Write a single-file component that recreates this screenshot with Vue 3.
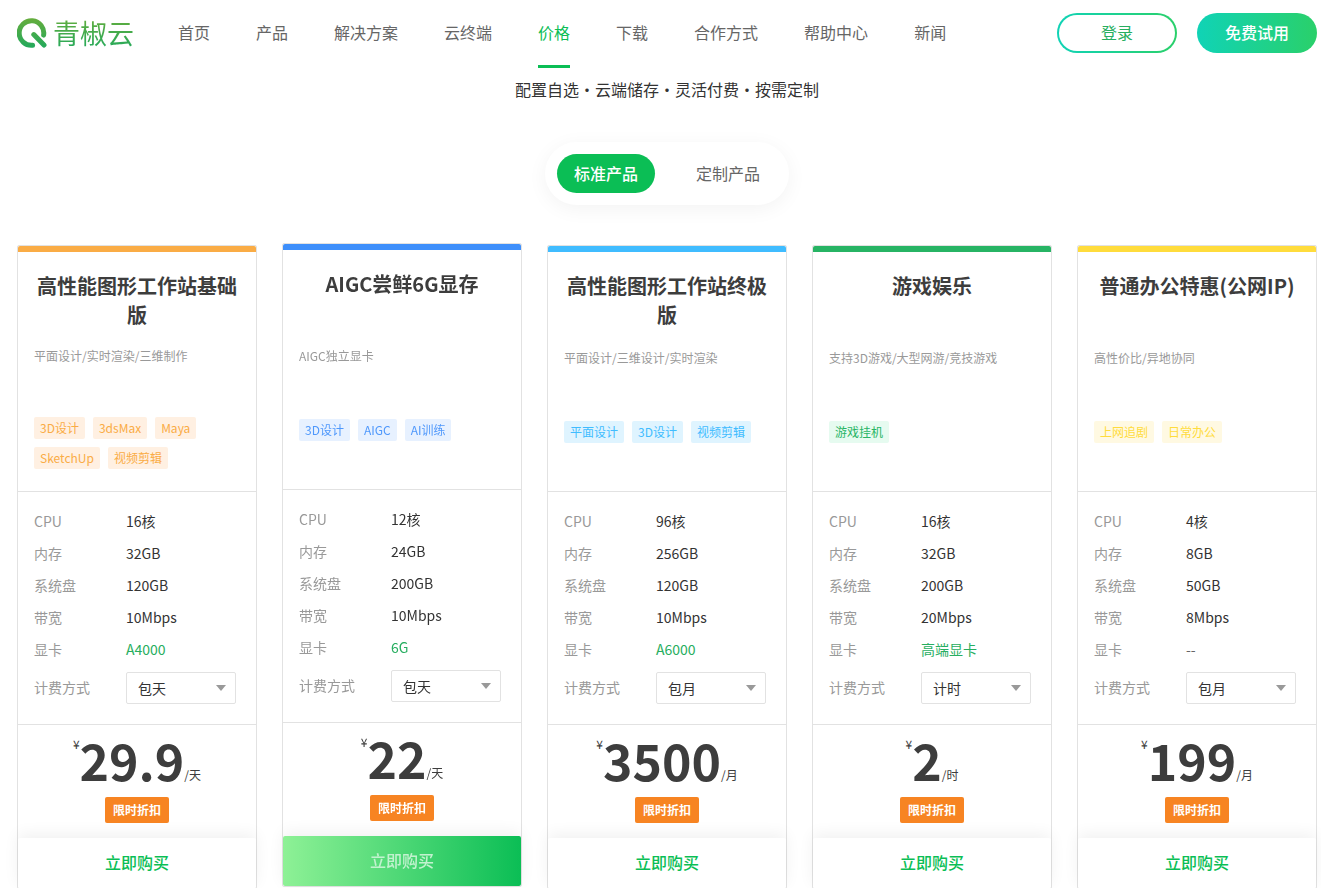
<script setup>
import { ref } from 'vue'

const navItems = ['首页', '产品', '解决方案', '云终端', '价格', '下载', '合作方式', '帮助中心', '新闻']
const activeNav = '价格'

const tabs = ['标准产品', '定制产品']
const activeTab = ref('标准产品')

const plans = ref([
  {
    theme: 'orange', title: '高性能图形工作站基础版', desc: '平面设计/实时渲染/三维制作',
    tags: ['3D设计', '3dsMax', 'Maya', 'SketchUp', '视频剪辑'],
    specs: [['CPU', '16核'], ['内存', '32GB'], ['系统盘', '120GB'], ['带宽', '10Mbps']],
    gpu: 'A4000', billing: '包天', price: '29.9', unit: '天'
  },
  {
    theme: 'blue', featured: true, title: 'AIGC尝鲜6G显存', desc: 'AIGC独立显卡',
    tags: ['3D设计', 'AIGC', 'AI训练'],
    specs: [['CPU', '12核'], ['内存', '24GB'], ['系统盘', '200GB'], ['带宽', '10Mbps']],
    gpu: '6G', billing: '包天', price: '22', unit: '天'
  },
  {
    theme: 'cyan', title: '高性能图形工作站终极版', desc: '平面设计/三维设计/实时渲染',
    tags: ['平面设计', '3D设计', '视频剪辑'],
    specs: [['CPU', '96核'], ['内存', '256GB'], ['系统盘', '120GB'], ['带宽', '10Mbps']],
    gpu: 'A6000', billing: '包月', price: '3500', unit: '月'
  },
  {
    theme: 'green', title: '游戏娱乐', desc: '支持3D游戏/大型网游/竞技游戏',
    tags: ['游戏挂机'],
    specs: [['CPU', '16核'], ['内存', '32GB'], ['系统盘', '200GB'], ['带宽', '20Mbps']],
    gpu: '高端显卡', billing: '计时', price: '2', unit: '时'
  },
  {
    theme: 'yellow', title: '普通办公特惠(公网IP)', desc: '高性价比/异地协同',
    tags: ['上网追剧', '日常办公'],
    specs: [['CPU', '4核'], ['内存', '8GB'], ['系统盘', '50GB'], ['带宽', '8Mbps']],
    gpu: '--', billing: '包月', price: '199', unit: '月'
  }
])

const billingOptions = ['计时', '包天', '包月']
</script>

<template>
  <div class="page">
    <header class="header">
      <a class="logo" href="#" aria-label="青椒云">
        <svg class="logo-mark" viewBox="0 0 30 30" aria-hidden="true">
          <defs>
            <linearGradient id="logo-fill" gradientUnits="userSpaceOnUse" x1="0" y1="0" x2="0" y2="30">
              <stop offset="0" stop-color="#66ad3c" />
              <stop offset="1" stop-color="#22a95c" />
            </linearGradient>
          </defs>
          <g fill="none" stroke="url(#logo-fill)" stroke-width="5" stroke-linecap="round">
            <path d="M26.6 17.1A12.3 12.3 0 1 0 15.6 27.3" />
            <path d="M16.8 16.6L27 27" />
          </g>
        </svg>
        <span class="logo-text">青椒云</span>
      </a>
      <nav class="nav">
        <a v-for="item in navItems" :key="item" href="#" :class="{ active: item === activeNav }">{{ item }}</a>
      </nav>
      <div class="actions">
        <button type="button" class="login">登录</button>
        <button type="button" class="trial">免费试用</button>
      </div>
    </header>

    <main>
      <p class="subtitle">配置自选・云端储存・灵活付费・按需定制</p>

      <div class="tabs">
        <button
          v-for="tab in tabs" :key="tab" type="button"
          :class="{ active: tab === activeTab }" @click="activeTab = tab"
        >{{ tab }}</button>
      </div>

      <section class="plans">
        <article v-for="plan in plans" :key="plan.title" class="card" :class="[plan.theme, { featured: plan.featured }]">
          <div class="intro">
            <h3>{{ plan.title }}</h3>
            <p class="desc">{{ plan.desc }}</p>
            <div class="tags">
              <span v-for="tag in plan.tags" :key="tag">{{ tag }}</span>
            </div>
          </div>
          <div class="config">
            <dl>
              <div v-for="[name, value] in plan.specs" :key="name" class="row">
                <dt>{{ name }}</dt>
                <dd>{{ value }}</dd>
              </div>
              <div class="row">
                <dt>显卡</dt>
                <dd :class="plan.gpu === '--' ? 'none' : 'gpu'">{{ plan.gpu }}</dd>
              </div>
            </dl>
            <div class="billing">
              <label :for="'billing-' + plan.theme">计费方式</label>
              <div class="picker">
                <select :id="'billing-' + plan.theme" v-model="plan.billing">
                  <option v-for="option in billingOptions" :key="option">{{ option }}</option>
                </select>
              </div>
            </div>
          </div>
          <div class="cost">
            <p class="price">
              <span class="currency">¥</span><strong>{{ plan.price }}</strong><span class="unit">/{{ plan.unit }}</span>
            </p>
            <span class="discount">限时折扣</span>
          </div>
          <button type="button" class="buy">立即购买</button>
        </article>
      </section>
    </main>
  </div>
</template>

<style>
body {
  margin: 0;
  background: #fff;
}
</style>

<style scoped>
.page {
  padding: 0 4px 0 17px;
  color: #333;
  font-family: "Noto Sans CJK SC", sans-serif;
  font-size: 14px;
}

.page * {
  box-sizing: border-box;
}

button,
select {
  font-family: inherit;
  cursor: pointer;
}

a {
  color: inherit;
  text-decoration: none;
}

h3,
p,
dl,
dd {
  margin: 0;
}

.header {
  display: flex;
  align-items: flex-start;
  height: 68px;
}

.logo {
  display: flex;
  align-items: center;
  gap: 6px;
  margin-right: 45px;
  height: 66px;
}

.logo-mark {
  width: 30px;
  height: 30px;
}

.logo-text {
  width: 80px;
  font-size: 27px;
  line-height: 34px;
  white-space: nowrap;
  color: transparent;
  background: linear-gradient(#66ad3c, #22a95c);
  background-clip: text;
}

.nav {
  display: flex;
  gap: 46px;
}

.nav a {
  height: 68px;
  border-bottom: 3px solid transparent;
  color: #666;
  font-size: 16px;
  line-height: 64px;
  white-space: nowrap;
}

.nav .active {
  color: #0bbe55;
  border-color: #0bbe55;
}

.actions {
  display: flex;
  gap: 20px;
  margin-left: auto;
  height: 66px;
  align-items: center;
}

.actions button {
  width: 120px;
  height: 40px;
  padding: 0 0 2px;
  border: 2px solid transparent;
  border-radius: 20px;
  font-size: 16px;
}

.login {
  color: #27ae60;
  background:
    linear-gradient(#fff, #fff) padding-box,
    linear-gradient(90deg, #10d3b6, #2ad06a) border-box;
}

.trial {
  color: #fff;
  font-weight: 500;
  background: linear-gradient(90deg, #10d3b6, #2ad06a) border-box;
}

.subtitle {
  padding: 9px 0 1px;
  font-size: 16px;
  line-height: 24px;
  text-align: center;
}

.tabs {
  display: flex;
  gap: 24px;
  width: fit-content;
  margin: 40px auto;
  padding: 12px;
  border-radius: 32px;
  box-shadow: 0 4px 20px rgba(0, 0, 0, 0.05);
}

.tabs button {
  width: 98px;
  height: 39px;
  padding: 0 0 2px;
  border: 0;
  border-radius: 20px;
  background: none;
  color: #666;
  font-size: 16px;
}

.tabs .active {
  background: #0bbe55;
  color: #fff;
  font-weight: 500;
}

.plans {
  display: grid;
  grid-template-columns: repeat(5, 1fr);
  gap: 25px;
}

.card {
  border: 1px solid #e2e2e2;
  border-radius: 2px;
  background: #fff;
}

.featured {
  transform: translateY(-2px);
  will-change: transform;
}

.intro {
  display: flex;
  flex-direction: column;
  height: 246px;
  padding: 19px 16px 22px;
  border-top: 6px solid var(--accent);
  border-bottom: 1px solid #e2e2e2;
  border-radius: 2px 2px 0 0;
}

h3 {
  flex: 0 1 60px;
  color: #3d3d3d;
  font-size: 20px;
  line-height: 29px;
  font-weight: 700;
  text-align: center;
}

.desc {
  flex: 0 1 72px;
  margin-top: 18px;
  color: #999;
  font-size: 12px;
  line-height: 18px;
}

.tags {
  display: flex;
  flex: none;
  flex-wrap: wrap;
  gap: 8px;
}

.tags span {
  padding: 0 6px;
  border-radius: 2px;
  background: var(--tint);
  color: var(--tag, var(--accent));
  font-size: 12px;
  line-height: 22px;
}

.orange { --accent: #faac45; --tint: #fff0e2; }
.blue { --accent: #3e8ffb; --tint: #e7f1ff; --tag: #4f98fc; }
.cyan { --accent: #40bcff; --tint: #dff4ff; }
.green { --accent: #27b464; --tint: #e6fbf0; }
.yellow { --accent: #ffdc3c; --tint: #fff9e2; }

.config {
  padding: 13px 20px 20px 16px;
  border-bottom: 1px solid #e2e2e2;
}

.row {
  display: flex;
  line-height: 32px;
}

.row dt {
  width: 92px;
  color: #999;
}

.row .gpu {
  color: #27ae60;
}

.row .none {
  color: #666;
}

.billing {
  display: flex;
  align-items: center;
  justify-content: space-between;
  margin-top: 7px;
}

.billing label {
  padding-bottom: 2px;
  color: #999;
}

.picker {
  position: relative;
  width: 110px;
}

.picker::after {
  content: "";
  position: absolute;
  top: 13px;
  right: 10px;
  border: 5px solid transparent;
  border-top: 6px solid #999;
  border-bottom: 0;
  pointer-events: none;
}

.picker select {
  display: block;
  width: 100%;
  height: 32px;
  padding: 0 24px 0 11px;
  border: 1px solid #e2e2e2;
  border-radius: 2px;
  background: #fff;
  color: #333;
  font-size: 14px;
  appearance: none;
}

.cost {
  display: flex;
  flex-direction: column;
  align-items: center;
  height: 113px;
}

.price {
  display: flex;
  align-items: flex-start;
  height: 72px;
  color: #3d3d3d;
}

.price strong {
  font-size: 50px;
  line-height: 68px;
  font-weight: 700;
}

.currency {
  padding-top: 10px;
  font-size: 12px;
  line-height: 18px;
}

.unit {
  padding-top: 41px;
  font-size: 12px;
  line-height: 18px;
}

.discount {
  padding: 0 8px;
  border-radius: 2px;
  background: #f78422;
  color: #fff;
  font-size: 12px;
  font-weight: 700;
  line-height: 26px;
}

.buy {
  display: block;
  width: 100%;
  height: 50px;
  padding: 0 0 2px;
  border: 0;
  border-radius: 2px;
  background: #fff;
  box-shadow: 0 -4px 16px rgba(0, 0, 0, 0.06);
  color: #0bbe55;
  font-size: 16px;
  font-weight: 500;
}

.featured .buy {
  background: linear-gradient(90deg, #8ef196, #0bbe55);
  color: #c2f2cf;
}
</style>
